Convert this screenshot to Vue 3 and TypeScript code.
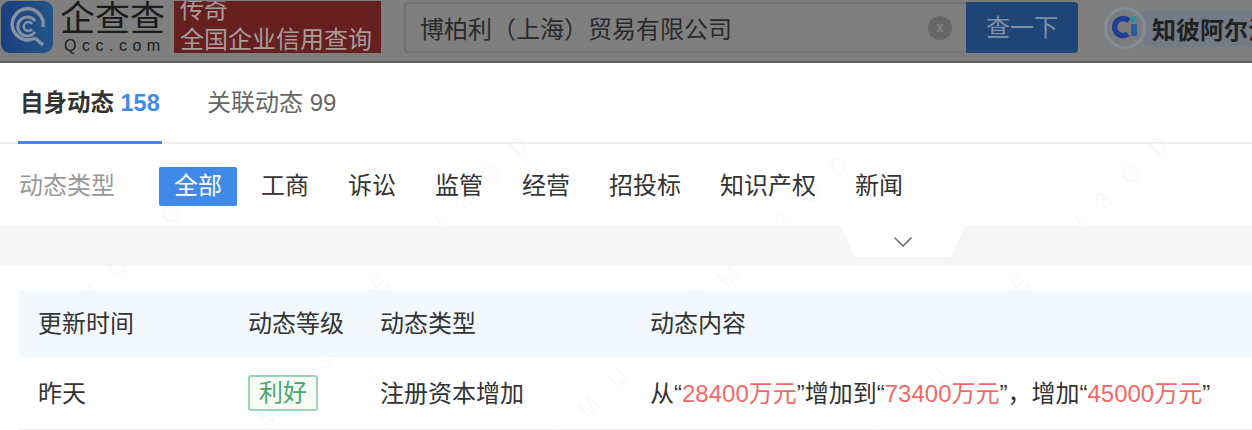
<script setup lang="ts">
const tabs = ['全部', '工商', '诉讼', '监管', '经营', '招投标', '知识产权', '新闻']
const wm = [
  { left: '20px', top: '170px' },
  { left: '340px', top: '130px' },
  { left: '660px', top: '150px' },
  { left: '980px', top: '130px' },
  { left: '200px', top: '290px' },
  { left: '520px', top: '280px' },
  { left: '840px', top: '280px' },
]
</script>

<template>
  <div class="page">
    <header class="top">
      <div class="logo-mark">
        <svg width="52" height="52" viewBox="0 0 52 52">
          <defs>
            <linearGradient id="lg" x1="0" y1="0" x2="1" y2="0">
              <stop offset="0" stop-color="#1a3f80" />
              <stop offset="1" stop-color="#245689" />
            </linearGradient>
          </defs>
          <rect width="52" height="52" rx="9" fill="url(#lg)" />
          <path d="M34 37a15.500 15.500 0 1 1 8-11" fill="none" stroke="#8791a0" stroke-width="3.500" />
          <path d="M34 31a9.500 9.500 0 1 1 0-11" fill="none" stroke="#8791a0" stroke-width="3" />
          <path d="M31 28a4.500 4.500 0 1 1 0-5" fill="none" stroke="#8791a0" stroke-width="2.500" />
          <path d="M34 37l8 7" stroke="#8791a0" stroke-width="3.500" />
        </svg>
      </div>
      <div class="logo-text">
        <div class="logo-cn">企查查</div>
        <div class="logo-en">Qcc.com</div>
      </div>
      <div class="banner">
        <div class="b1">传奇</div>
        <div class="b1">全国企业信用查询</div>
      </div>
      <div class="search">
        <span class="query">博柏利（上海）贸易有限公司</span>
        <span class="clear">x</span>
        <span class="go">查一下</span>
      </div>
      <div class="promo">
        <div class="promo-icon">
          <svg width="42" height="42" viewBox="0 0 42 42">
            <circle cx="21" cy="21" r="19.500" fill="#7c7c7c" stroke="#848c96" stroke-width="3" />
            <path d="M25 14A8.500 8.500 0 1 0 24 27" fill="none" stroke="#1f3f94" stroke-width="5.500" />
            <circle cx="29.500" cy="12" r="3.200" fill="#2f8f9b" />
            <rect x="27" y="17" width="6" height="12" rx="1" fill="#2a5ba3" />
          </svg>
        </div>
        <span class="promo-text">知彼阿尔法</span>
      </div>
    </header>

    <main class="body">
      <div class="watermarks">
        <span v-for="(w, i) in wm" :key="i" class="wm" :style="w">EMU3OD</span>
      </div>

      <nav class="tabs">
        <div class="tab active">自身动态 <b>158</b></div>
        <div class="tab">关联动态 99</div>
      </nav>

      <div class="filters">
        <span class="f-label">动态类型</span>
        <span v-for="(t, i) in tabs" :key="t" class="chip" :class="{ on: i === 0 }">{{ t }}</span>
      </div>

      <div class="band">
        <div class="notch">
          <svg width="20" height="12" viewBox="0 0 20 12">
            <path d="M1.500 1.500L10 10l8.500-8.500" fill="none" stroke="#666" stroke-width="1.500" />
          </svg>
        </div>
      </div>

      <div class="table">
        <div class="row head">
          <span class="c1">更新时间</span>
          <span class="c2">动态等级</span>
          <span class="c3">动态类型</span>
          <span class="c4">动态内容</span>
        </div>
        <div class="row">
          <span class="c1">昨天</span>
          <span class="c2"><em class="tag">利好</em></span>
          <span class="c3">注册资本增加</span>
          <span class="c4">从“<i>28400万元</i>”增加到“<i>73400万元</i>”，增加“<i>45000万元</i>”</span>
        </div>
      </div>
    </main>
  </div>
</template>

<style>
html, body { margin: 0; background: #fff; overflow: hidden; }
</style>

<style scoped>
.page {
  width: 1252px;
  height: 430px;
  overflow: hidden;
  font-family: "Liberation Sans", "Noto Sans CJK SC", sans-serif;
  font-size: 24px;
  color: #333;
}
.top {
  height: 61px;
  background: #7f7f7f;
  border-bottom: 2px solid #5f5f5f;
  display: flex;
  align-items: flex-start;
  overflow: hidden;
  white-space: nowrap;
}
.top > * { flex: none; }
.logo-mark { margin: 1px 0 0 1px; height: 52px; }
.logo-text { margin-left: 7px; width: 105px; color: #1c1c1c; }
.logo-cn { font-size: 35px; line-height: 38px; font-weight: 400; }
.logo-en { font-size: 16px; line-height: 16px; letter-spacing: 5.500px; margin-left: 4px; }
.banner {
  margin: 1px 0 0 9px;
  width: 207px;
  height: 52px;
  background: #662020;
  color: #a89c9c;
  overflow: hidden;
  padding-left: 6px;
  box-sizing: border-box;
}
.b1 { line-height: 30px; position: relative; top: -6px; }
.search {
  margin: 2px 0 0 23px;
  width: 674px;
  height: 51px;
  box-sizing: border-box;
  border: 2px solid #737373;
  border-radius: 4px;
  display: flex;
  align-items: center;
}
.query { margin-left: 14px; color: #2a2a2a; flex: 1; }
.clear {
  width: 24px;
  height: 24px;
  border-radius: 50%;
  background: #676767;
  color: #8c8c8c;
  font-size: 14px;
  line-height: 23px;
  text-align: center;
  margin-right: 14px;
}
.go {
  align-self: stretch;
  width: 112px;
  margin: -2px -2px -2px 0;
  background: #204677;
  color: #7f91a9;
  text-align: center;
  line-height: 51px;
  border-radius: 0 4px 4px 0;
}
.promo {
  margin: 9px 0 0 26px;
  display: flex;
  align-items: center;
  width: 200px;
  height: 38px;
  background: linear-gradient(90deg, #7f7f7f 40px, #747b86 40px);
}
.promo-icon { height: 42px; }
.promo-text { margin-left: 6px; font-weight: 700; color: #222; }
.body { position: relative; }
.watermarks { position: absolute; inset: 0; height: 367px; overflow: hidden; pointer-events: none; }
.wm {
  position: absolute;
  transform: rotate(-45deg);
  color: #fafafa;
  font-size: 24px;
  letter-spacing: 22px;
  white-space: nowrap;
}
.tabs {
  position: relative;
  height: 81px;
  box-sizing: border-box;
  padding-left: 18px;
  display: flex;
  gap: 45px;
  border-bottom: 2px solid #eee;
}
.tab {
  height: 81px;
  box-sizing: border-box;
  line-height: 80px;
  color: #666;
  white-space: nowrap;
}
.tab.active {
  font-size: 23.500px;
  font-weight: 700;
  color: #333;
  border-bottom: 3px solid #4189e8;
  padding-left: 2px;
  width: 144px;
}
.tab b { color: #4189e8; }
.filters {
  position: relative;
  height: 82px;
  box-sizing: border-box;
  padding: 23px 0 0 19px;
  display: flex;
  align-items: flex-start;
}
.f-label { color: #999; width: 140px; line-height: 37px; padding-bottom: 2px; }
.chip { line-height: 37px; padding: 0 15px 2px; margin-right: 9px; border-radius: 2px; }
.chip.on { background: #4189e8; color: #fff; }
.band {
  position: relative;
  height: 40px;
  background: #f6f6f6;
  padding-left: 841px;
}
.notch {
  width: 124px;
  height: 31px;
  background: #fff;
  clip-path: polygon(0 0, 100% 0, 89% 100%, 11% 100%);
  display: flex;
  justify-content: center;
  padding-top: 10px;
  box-sizing: border-box;
}
.table { position: relative; margin: 24px 0 0 19px; }
.row {
  display: flex;
  align-items: center;
  height: 73px;
  border-bottom: 1px solid #eee;
  white-space: nowrap;
  padding-bottom: 4px;
  box-sizing: border-box;
}
.row.head { height: 67px; background: #f3f8fd; border-bottom: 0; }
.c1, .c2, .c3 { flex: none; }
.c1 { width: 229px; padding-left: 19px; box-sizing: border-box; }
.c2 { width: 132px; }
.c3 { width: 270px; }
.tag {
  display: inline-block;
  position: relative;
  top: 2px;
  font-style: normal;
  color: #4aa766;
  background: #f6fbf8;
  border: 2px solid #99d5b3;
  border-radius: 3px;
  line-height: 32px;
  padding: 0 9px;
  vertical-align: middle;
}
.c4 i { font-style: normal; color: #f06a68; }
</style>
